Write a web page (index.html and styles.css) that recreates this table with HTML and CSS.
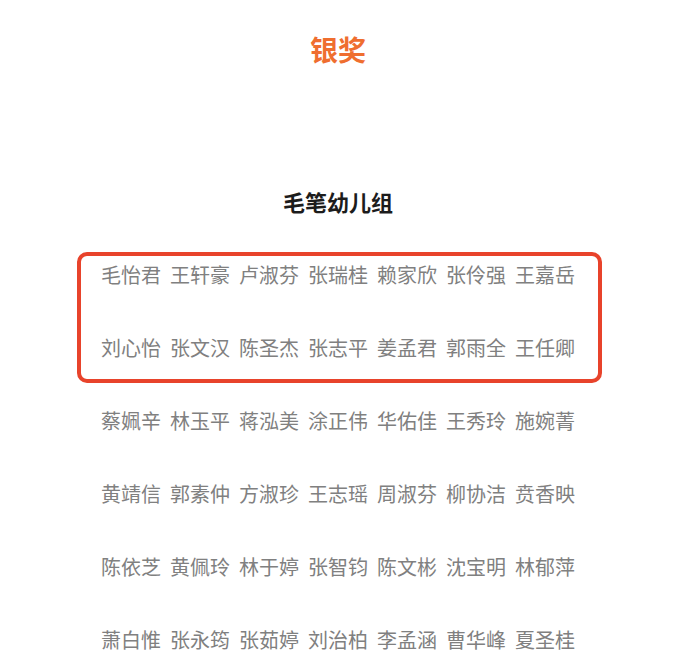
FILE: index.html
```html
<!DOCTYPE html>
<html lang="zh-CN">
<head>
<meta charset="utf-8">
<title>银奖</title>
<link rel="stylesheet" href="styles.css">
</head>
<body>
<main class="page">
  <h1 class="award">银奖</h1>
  <h2 class="group">毛笔幼儿组</h2>
  <div class="names">
    <div class="highlight"></div>
    <div class="row"><span>毛怡君</span><span>王轩豪</span><span>卢淑芬</span><span>张瑞桂</span><span>赖家欣</span><span>张伶强</span><span>王嘉岳</span></div>
    <div class="row"><span>刘心怡</span><span>张文汉</span><span>陈圣杰</span><span>张志平</span><span>姜孟君</span><span>郭雨全</span><span>王任卿</span></div>
    <div class="row"><span>蔡姵辛</span><span>林玉平</span><span>蒋泓美</span><span>涂正伟</span><span>华佑佳</span><span>王秀玲</span><span>施婉菁</span></div>
    <div class="row"><span>黄靖信</span><span>郭素仲</span><span>方淑珍</span><span>王志瑶</span><span>周淑芬</span><span>柳协洁</span><span>贲香映</span></div>
    <div class="row"><span>陈依芝</span><span>黄佩玲</span><span>林于婷</span><span>张智钧</span><span>陈文彬</span><span>沈宝明</span><span>林郁萍</span></div>
    <div class="row"><span>萧白惟</span><span>张永筠</span><span>张茹婷</span><span>刘治柏</span><span>李孟涵</span><span>曹华峰</span><span>夏圣桂</span></div>
  </div>
</main>
</body>
</html>
```
FILE: styles.css
```css
html, body {
  margin: 0;
  padding: 0;
  background: #ffffff;
}
body {
  font-family: "Noto Sans CJK SC", "Noto Sans", sans-serif;
}
.page {
  width: 676px;
  text-align: center;
}
.award {
  margin: 29px 0 0;
  font-size: 28px;
  line-height: 40px;
  font-weight: 700;
  color: #ef6e2f;
}
.group {
  margin: 117px 0 0;
  font-size: 22px;
  line-height: 30px;
  font-weight: 700;
  color: #1c1c1c;
}
.names {
  position: relative;
  margin-top: 40px;
  display: flex;
  flex-direction: column;
  gap: 36px;
}
.row {
  display: flex;
  justify-content: center;
  gap: 9px;
  font-size: 20px;
  line-height: 37px;
  color: #808080;
}
.highlight {
  position: absolute;
  left: 77px;
  top: -4px;
  width: 525px;
  height: 131px;
  box-sizing: border-box;
  border: 4px solid #e8432b;
  border-radius: 10px;
}
```
